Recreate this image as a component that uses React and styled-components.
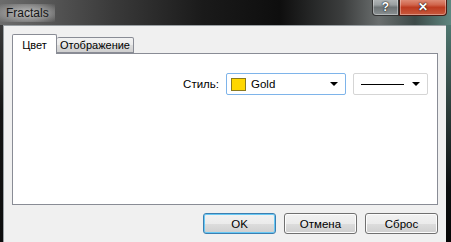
import React from "react";
import styled, { createGlobalStyle } from "styled-components";

const Global = createGlobalStyle`
  html, body { margin: 0; padding: 0; background: #000; }
  body { font-family: "Liberation Sans", Arial, sans-serif; }
`;

const Window = styled.div`
  width: 451px;
  height: 242px;
  display: flex;
  flex-direction: column;
  overflow: hidden;
  background: linear-gradient(90deg, #6c6c6c 0%, #3a3a3a 25%, #1a1a1a 45%, #0e0e0e 62%, #3c3e3e 76%, #6a6e6e 84%, #3d4a48 92%, #5f8780 100%);
`;

const TitleBar = styled.div`
  height: 25px;
  display: flex;
  align-items: flex-start;
  padding: 0 4px 0 6px;
  flex-shrink: 0;
`;

const Title = styled.span`
  margin-top: 4px;
  font-size: 12px;
  color: #151515;
  background: radial-gradient(ellipse at center, rgba(215, 215, 215, 0.8) 0%, rgba(180, 180, 180, 0.5) 60%, rgba(120, 120, 120, 0) 100%);
  padding: 2px 6px;
  margin-left: -6px;
`;

const CaptionButtons = styled.div`
  margin-left: auto;
  display: flex;
  margin-top: -2px;
`;

const CapBtn = styled.div`
  width: ${(p) => p.w}px;
  height: 18px;
  border: 1px solid ${(p) => (p.close ? "#4a1a12" : "#333")};
  border-top: none;
  border-radius: ${(p) => (p.close ? "0 0 4px 0" : "0 0 0 4px")};
  box-sizing: border-box;
  display: flex;
  align-items: center;
  justify-content: center;
  background: ${(p) =>
    p.close
      ? "linear-gradient(180deg, #e39a86 0%, #d0654c 40%, #bd3b20 55%, #c85a3e 100%)"
      : "linear-gradient(180deg, #b8bcbd 0%, #9aa0a2 40%, #6e7476 55%, #8a9092 100%)"};
  box-shadow: inset 0 0 0 1px rgba(255, 255, 255, 0.35);
  color: #fff;
  font-weight: bold;
  font-size: 12px;
  text-shadow: 0 0 2px #222, 0 0 1px #000;
`;

const Body = styled.div`
  flex: 1;
  display: flex;
  min-height: 0;
`;

const FrameLeft = styled.div`
  width: 4px;
  background: linear-gradient(180deg, #3a3a3a, #141414 40%, #0d0d0d);
`;

const FrameRight = styled.div`
  width: 5px;
  background: linear-gradient(180deg, #4f7770, #2b3a38 40%, #0c0f10 75%, #060606);
`;

const Client = styled.div`
  flex: 1;
  background: #f0f0f0;
  padding: 8px 8px 0 8px;
  display: flex;
  flex-direction: column;
  border-left: 1px solid #9aa0a4;
  border-top: 1px solid #9aa0a4;
  margin-left: -1px;
`;

const TabStrip = styled.div`
  display: flex;
  align-items: flex-end;
  height: 19px;
  position: relative;
  z-index: 1;
`;

const Tab = styled.div`
  box-sizing: border-box;
  height: ${(p) => (p.active ? 20 : 16)}px;
  margin-bottom: ${(p) => (p.active ? -1 : 0)}px;
  width: ${(p) => p.w}px;
  justify-content: center;
  border: 1px solid #898c95;
  border-bottom: ${(p) => (p.active ? "none" : "1px solid #898c95")};
  border-left: ${(p) => (p.first ? "1px solid #898c95" : "none")};
  border-radius: 2px 2px 0 0;
  background: ${(p) => (p.active ? "#fff" : "linear-gradient(180deg, #f2f2f2 0%, #ebebeb 50%, #dddddd 51%, #cfcfcf 100%)")};
  font-size: 11px;
  color: #000;
  display: flex;
  align-items: center;
`;

const Panel = styled.div`
  height: 152px;
  background: #fff;
  border: 1px solid #898c95;
  box-sizing: border-box;
  padding: 19px 9px 0 0;
`;

const Row = styled.div`
  display: flex;
  justify-content: flex-end;
  align-items: center;
`;

const Label = styled.span`
  font-size: 11.5px;
  color: #000;
  margin-right: 7px;
`;

const Combo = styled.div`
  box-sizing: border-box;
  width: ${(p) => p.w}px;
  height: 22px;
  margin-left: ${(p) => p.ml || 0}px;
  border: 1px solid ${(p) => (p.focused ? "#7eb4ea" : "#d5d5d5")};
  border-radius: 2px;
  background: #fff;
  display: flex;
  align-items: center;
  padding: 0 7px 0 4px;
`;

const Swatch = styled.div`
  width: 13px;
  height: 11px;
  background: #ffd700;
  border: 1px solid #8a7a20;
  margin-right: 5px;
`;

const ComboText = styled.span`
  font-size: 11.5px;
  color: #000;
  flex: 1;
`;

const LineSample = styled.div`
  width: 43px;
  height: 1px;
  background: #000;
  margin-left: 3px;
  margin-right: auto;
`;

const Arrow = styled.div`
  width: 0;
  height: 0;
  border-left: 4px solid transparent;
  border-right: 4px solid transparent;
  border-top: 4px solid #000;
`;

const Buttons = styled.div`
  display: flex;
  justify-content: flex-end;
  gap: 8px;
  margin-top: 8px;
`;

const Button = styled.div`
  box-sizing: border-box;
  width: 73px;
  height: 21px;
  border: 1px solid ${(p) => (p.def ? "#3c7fb1" : "#707070")};
  border-radius: 3px;
  background: linear-gradient(180deg, #f2f2f2 0%, #ebebeb 50%, #dddddd 51%, #cfcfcf 100%);
  box-shadow: inset 0 0 0 1px ${(p) => (p.def ? "#68c8f4" : "#fcfcfc")};
  font-size: 11.5px;
  color: #000;
  display: flex;
  align-items: center;
  justify-content: center;
`;

export default function App() {
  return (
    <>
      <Global />
      <Window>
        <TitleBar>
          <Title>Fractals</Title>
          <CaptionButtons>
            <CapBtn w={27}>?</CapBtn>
            <CapBtn w={48} close>✕</CapBtn>
          </CaptionButtons>
        </TitleBar>
        <Body>
          <FrameLeft />
          <Client>
            <TabStrip>
              <Tab active first w={45}>Цвет</Tab>
              <Tab w={77}>Отображение</Tab>
            </TabStrip>
            <Panel>
              <Row>
                <Label>Стиль:</Label>
                <Combo w={120} focused>
                  <Swatch />
                  <ComboText>Gold</ComboText>
                  <Arrow />
                </Combo>
                <Combo w={75} ml={7}>
                  <LineSample />
                  <Arrow />
                </Combo>
              </Row>
            </Panel>
            <Buttons>
              <Button def>OK</Button>
              <Button>Отмена</Button>
              <Button>Сброс</Button>
            </Buttons>
          </Client>
          <FrameRight />
        </Body>
      </Window>
    </>
  );
}
